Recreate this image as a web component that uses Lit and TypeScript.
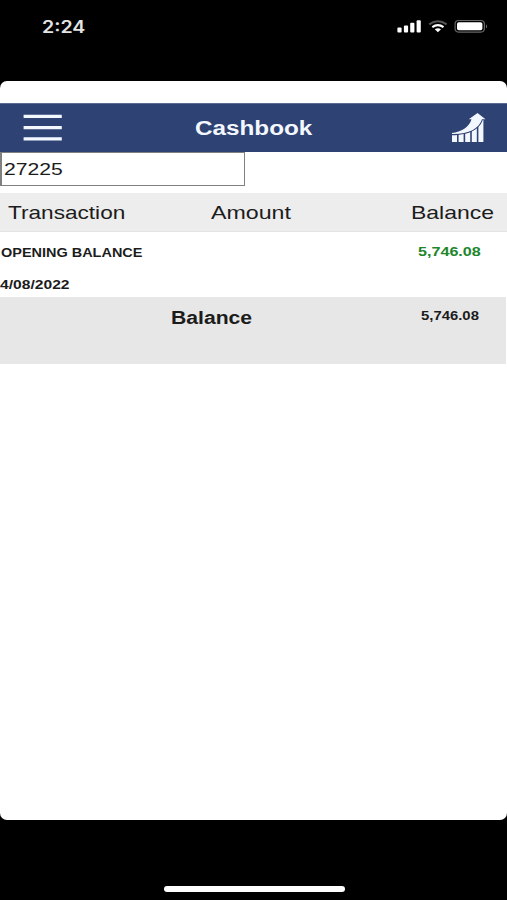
import { LitElement, html, css, svg } from "lit";
import { customElement } from "lit/decorators.js";

@customElement("status-bar")
class StatusBar extends LitElement {
  static styles = css`
    :host { display: flex; height: 81px; box-sizing: border-box; padding: 14px 19px 0 42px; justify-content: space-between; align-items: flex-start; color: #e4e4e4; }
    .time { font: 600 17px/25px Inter, "Liberation Sans", sans-serif; transform: translateY(0.5px) scaleX(1.15); transform-origin: left; }
    svg { display: block; margin-top: 5px; }
  `;
  render() {
    return html`<span class="time">2:24</span>
      <svg width="92" height="16" viewBox="396 19 92 16">
        <g fill="#fff">
          <rect x="397.4" y="27.6" width="4.2" height="4.8" rx="1" />
          <rect x="403.9" y="25.4" width="4.2" height="7" rx="1" />
          <rect x="410.2" y="22.8" width="4.2" height="9.6" rx="1" />
          <rect x="416.6" y="20.2" width="4.2" height="12.2" rx="1" />
          <path d="M434.8 29.3Q437.9 27.3 441 29.3L437.9 32.3Z" />
        </g>
        <path d="M429.2 24.4Q437.9 18.2 446.6 24.4" fill="none" stroke="#555" stroke-width="2" />
        <path d="M432.3 27.2Q437.9 22.9 443.5 27.2" fill="none" stroke="#fff" stroke-width="2.2" />
        <rect x="455.1" y="20.5" width="29.3" height="11.6" rx="3.5" fill="none" stroke="#666" stroke-width="1.2" />
        <rect x="457" y="22.3" width="25.4" height="8" rx="1.8" fill="#fff" />
        <path d="M486 24.2q2 2.1 0 4.2z" fill="#777" />
      </svg>`;
  }
}

@customElement("nav-header")
class NavHeader extends LitElement {
  static styles = css`
    :host { display: grid; grid-template-columns: 90px 1fr 90px; align-items: center; height: 49px; background: #2f4274; color: #f3f7ff; border-top: 1px solid #5b6b94; box-sizing: border-box; }
    .menu { margin-left: 23px; }
    .title { justify-self: center; font: 700 19.5px/24px "Liberation Sans", Arial, sans-serif; transform: translate(0.5px, -0.5px) scaleX(1.245); }
    svg { display: block; }
    .chart { justify-self: end; margin-right: 20px; }
  `;
  render() {
    return html`<svg class="menu" width="40" height="28" viewBox="0 0 40 28" fill="#f3f7ff">
        <path d="M.6 .8h38.2v3.2H.6zM.6 12.1h38.2v3.2H.6zM.6 23.2h38.2v3.2H.6z" />
      </svg>
      <span class="title">Cashbook</span>
      <svg class="chart" width="36" height="32" viewBox="451 112 36 32" fill="#f3f7ff">
        ${[0, 1, 2, 3, 4].map((i) => svg`<rect x=${452 + i * 6.6} y=${i === 4 ? 120 : 128} width="5" height=${i === 4 ? 22 : 14} />`)}
        <path d="M451 120H471L484 114.5C482.5 130 468 135.4 451 135.2Z" fill="#2f4274" />
        <path d="M452 133C461 132 469.5 127 471.5 119.2H468.8L477.5 112.9L485.5 119.2H482C479 129 468 134.3 452 133.9Z" />
      </svg>`;
  }
}

@customElement("app-root")
class AppRoot extends LitElement {
  static styles = css`
    :host { display: flex; flex-direction: column; height: 900px; background: #000; overflow: hidden; font-family: "Liberation Sans", Arial, sans-serif; color: #1c1c1c; }
    .card { height: 738.5px; box-sizing: border-box; padding-top: 22px; background: #fff; border-radius: 7px; overflow: hidden; }
    .field { display: flex; align-items: center; box-sizing: border-box; width: 245px; height: 34px; padding: 1px 0 0 1.5px; border: 1.5px solid #808080; border-left-width: 2px; font-size: 17px; }
    .wide { display: inline-block; white-space: nowrap; transform-origin: left; }
    .account { transform: scaleX(1.245); }
    .head, .foot, .entry { display: grid; grid-template-columns: 171px 240px 1fr; }
    .head { box-sizing: border-box; height: 39px; margin-top: 7px; background: #ededed; border-bottom: 1px solid #e4e4e4; font-size: 19px; line-height: 40px; }
    .h1 { margin-left: 7.5px; transform: scaleX(1.19); }
    .h2 { margin-left: 40px; transform: scaleX(1.22); }
    .h3 { transform: scaleX(1.21); }
    .entry { height: 65px; font-size: 12.5px; font-weight: 700; line-height: 16px; }
    .details { display: flex; flex-direction: column; align-items: flex-start; gap: 15px; padding-top: 13px; }
    .name { margin-left: 0.5px; transform: scaleX(1.157); }
    .date { transform: translateY(0.5px) scaleX(1.25); }
    .amount { justify-self: start; margin: 12px 0 0 7px; color: #21862b; transform: scaleX(1.29); }
    .foot { width: 506px; height: 67px; background: #e7e7e7; font-weight: 700; }
    .label { justify-self: start; font-size: 18px; line-height: 22px; margin-top: 10px; transform: scaleX(1.175); }
    .total { justify-self: start; font-size: 12px; line-height: 16px; margin: 11px 0 0 10px; transform: scaleX(1.24); }
    .home { width: 181px; height: 6px; margin: 66px 0 0 163.5px; background: #fff; border-radius: 3px; }
  `;
  render() {
    return html`<status-bar></status-bar>
      <main class="card">
        <nav-header></nav-header>
        <div class="field"><span class="wide account">27225</span></div>
        <div class="head">
          <span><span class="wide h1">Transaction</span></span>
          <span><span class="wide h2">Amount</span></span>
          <span><span class="wide h3">Balance</span></span>
        </div>
        <div class="entry">
          <div class="details"><span class="wide name">OPENING BALANCE</span><span class="wide date">4/08/2022</span></div>
          <span></span>
          <span class="wide amount">5,746.08</span>
        </div>
        <div class="foot">
          <span></span>
          <span class="wide label">Balance</span>
          <span class="wide total">5,746.08</span>
        </div>
      </main>
      <div class="home"></div>`;
  }
}
